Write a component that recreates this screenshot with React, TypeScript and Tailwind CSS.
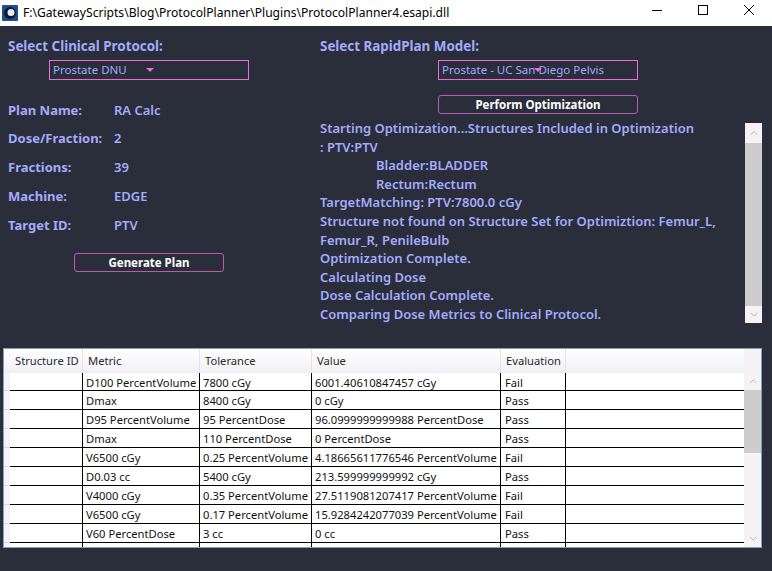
import { ChevronDown, ChevronUp } from "lucide-react";

const rows = [
  ["D100 PercentVolume", "7800 cGy", "6001.40610847457 cGy", "Fail"],
  ["Dmax", "8400 cGy", "0 cGy", "Pass"],
  ["D95 PercentVolume", "95 PercentDose", "96.0999999999988 PercentDose", "Pass"],
  ["Dmax", "110 PercentDose", "0 PercentDose", "Pass"],
  ["V6500 cGy", "0.25 PercentVolume", "4.18665611776546 PercentVolume", "Fail"],
  ["D0.03 cc", "5400 cGy", "213.599999999992 cGy", "Pass"],
  ["V4000 cGy", "0.35 PercentVolume", "27.5119081207417 PercentVolume", "Fail"],
  ["V6500 cGy", "0.17 PercentVolume", "15.9284242077039 PercentVolume", "Fail"],
  ["V60 PercentDose", "3 cc", "0 cc", "Pass"],
];

const planFields = [
  ["Plan Name:", "RA Calc"],
  ["Dose/Fraction:", "2"],
  ["Fractions:", "39"],
  ["Machine:", "EDGE"],
  ["Target ID:", "PTV"],
];

const logLines = [
  "Bladder:BLADDER",
  "Rectum:Rectum",
];

function Caret({ className }: { className: string }) {
  return <span className={`absolute h-0 w-0 border-x-[4px] border-t-[4px] border-x-transparent border-t-[#f06ad8] ${className}`} />;
}

function Dropdown({ label, caret }: { label: string; caret: string }) {
  return (
    <div className="relative flex h-[20px] w-[200px] items-center border border-[#f06ad8] pl-[3px] text-[11.5px] text-[#a3abfa]">
      {label}
      <Caret className={caret} />
    </div>
  );
}

function ActionButton({ label }: { label: string }) {
  return (
    <button
      type="button"
      className="flex h-[19px] items-center justify-center rounded-[3px] border border-[#c058ad] text-[11.5px] font-bold text-white"
    >
      {label}
    </button>
  );
}

function HeaderCell({ label, width }: { label: string; width: string }) {
  return (
    <div className={`flex h-full shrink-0 items-center whitespace-nowrap border-r border-[#e4e4ea] px-[5px] ${width}`}>
      {label}
    </div>
  );
}

function Row({ row, first }: { row: string[]; first: boolean }) {
  const height = first ? "h-[18px]" : "h-[19px]";
  const cell = "shrink-0 whitespace-nowrap border-b border-r border-black leading-[19px]";
  return (
    <div className={`flex shrink-0 ${height}`}>
      <div className="w-[6px] shrink-0 border-b border-[#dcdce2] bg-[#f6f2f6]" />
      <div className={`${cell} w-[73px]`} />
      <div className={`${cell} w-[117px] pl-[3px]`}>{row[0]}</div>
      <div className={`${cell} w-[112px] pl-[3px]`}>{row[1]}</div>
      <div className={`${cell} w-[189px] pl-[3px]`}>{row[2]}</div>
      <div className={`${cell} w-[65px] pl-[4px]`}>{row[3]}</div>
      <div className="flex-1 border-b border-black" />
    </div>
  );
}

export default function App() {
  return (
    <div className="flex h-[571px] w-[772px] flex-col overflow-hidden bg-[#2a2d3a] font-['Noto_Sans',sans-serif]">
      <header className="flex h-[26px] shrink-0 items-center bg-white pl-[2px] text-[12.1px] text-black">
        <svg width="16" height="16" viewBox="0 0 16 16" className="mr-[5px]">
          <rect width="16" height="16" rx="1" fill="#1f4e8c" />
          <circle cx="8" cy="8" r="6" fill="#0f1a2e" />
          <circle cx="9" cy="7.5" r="3.5" fill="#e8e8f0" />
        </svg>
        <span>F:\GatewayScripts\Blog\ProtocolPlanner\Plugins\ProtocolPlanner4.esapi.dll</span>
        <div className="ml-auto flex items-center">
          <svg width="46" height="26" viewBox="0 0 46 26">
            <path d="M18 10.5h10" stroke="#000" fill="none" />
          </svg>
          <svg width="46" height="26" viewBox="0 0 46 26">
            <rect x="18.5" y="5.5" width="9" height="9" stroke="#000" fill="none" />
          </svg>
          <svg width="46" height="26" viewBox="0 0 46 26">
            <path d="M18 5l10 10M28 5l-10 10" stroke="#000" fill="none" />
          </svg>
        </div>
      </header>

      <main className="flex min-h-0 flex-1 flex-col">
        <section className="flex h-[322px] shrink-0 text-[#a3abfa]">
          <div className="flex w-[320px] shrink-0 flex-col pl-[8px] pt-[12px]">
            <h2 className="text-[13.4px] leading-[17px] font-bold">Select Clinical Protocol:</h2>
            <div className="ml-[41px] mt-[5px]">
              <Dropdown label="Prostate DNU" caret="left-[96px] top-[7px]" />
            </div>
            <dl className="mt-[22px] flex flex-col gap-[12px] text-[13px] font-semibold leading-[17px]">
              {planFields.map(([k, v], i) => (
                <div key={k} className={i === 0 ? "-mb-[1px] flex" : "flex"}>
                  <dt className="w-[106px] font-bold">{k}</dt>
                  <dd>{v}</dd>
                </div>
              ))}
            </dl>
            <div className="ml-[66px] mt-[19px] flex w-[150px] flex-col">
              <ActionButton label="Generate Plan" />
            </div>
          </div>

          <div className="flex min-w-0 flex-1 flex-col pt-[12px]">
            <h2 className="text-[13.4px] leading-[17px] font-bold">Select RapidPlan Model:</h2>
            <div className="ml-[118px] mt-[5px]">
              <Dropdown label="Prostate - UC San Diego Pelvis" caret="left-[95px] top-[7px]" />
            </div>
            <div className="ml-[118px] mt-[15px] flex w-[200px] flex-col">
              <ActionButton label="Perform Optimization" />
            </div>
            <div className="mt-[9px] flex h-[200px]">
              <div className="-mt-[4px] w-[425px] shrink-0 text-[13px] font-semibold leading-[18.6px]">
                <p>Starting Optimization...Structures Included in Optimization</p>
                <p>: PTV:PTV</p>
                {logLines.map((line) => (
                  <p key={line} className="pl-[56px]">{line}</p>
                ))}
                <p>TargetMatching: PTV:7800.0 cGy</p>
                <p>Structure not found on Structure Set for Optimiztion: Femur_L,</p>
                <p>Femur_R, PenileBulb</p>
                <p>Optimization Complete.</p>
                <p>Calculating Dose</p>
                <p>Dose Calculation Complete.</p>
                <p>Comparing Dose Metrics to Clinical Protocol.</p>
              </div>
              <div className="ml-auto mr-[10px] flex w-[17px] flex-col items-center bg-[#f6f2f6]">
                <ChevronUp className="h-[20px] w-[12px] text-[#a6a6a6]" strokeWidth={1.5} />
                <div className="w-full flex-1 bg-[#cdcdcd]" />
                <ChevronDown className="h-[17px] w-[12px] text-[#a6a6a6]" strokeWidth={1.5} />
              </div>
            </div>
          </div>
        </section>

        <section className="mx-[3px] flex h-[200px] w-[759px] overflow-hidden border border-[#82a0b8] bg-white text-[11.2px] text-[#111]">
          <div className="flex min-w-0 flex-1 flex-col">
            <div className="flex h-[24px] shrink-0 bg-gradient-to-b from-[#ffffff] to-[#f1eff5] text-[#2a2a2a]">
              <div className="w-[6px] shrink-0" />
              <HeaderCell label="Structure ID" width="w-[73px]" />
              <HeaderCell label="Metric" width="w-[117px]" />
              <HeaderCell label="Tolerance" width="w-[112px]" />
              <HeaderCell label="Value" width="w-[189px]" />
              <HeaderCell label="Evaluation" width="w-[65px]" />
            </div>
            {rows.map((row, i) => (
              <Row key={i} row={row} first={i === 0} />
            ))}
            <div className="flex flex-1">
              <div className="w-[6px] shrink-0 bg-[#f6f2f6]" />
              <div className="w-[73px] shrink-0 border-r border-black" />
              <div className="w-[117px] shrink-0 border-r border-black" />
              <div className="w-[112px] shrink-0 border-r border-black" />
              <div className="w-[189px] shrink-0 border-r border-black" />
              <div className="w-[65px] shrink-0 border-r border-black" />
            </div>
          </div>
          <div className="flex w-[17px] shrink-0 flex-col items-center bg-[#f6f2f6] pt-[24px]">
            <ChevronUp className="h-[17px] w-[12px] text-[#a6a6a6]" strokeWidth={1.5} />
            <div className="h-[63px] w-full bg-[#cdcdcd]" />
            <ChevronDown className="mt-auto h-[17px] w-[12px] text-[#a6a6a6]" strokeWidth={1.5} />
          </div>
        </section>
      </main>
    </div>
  );
}
